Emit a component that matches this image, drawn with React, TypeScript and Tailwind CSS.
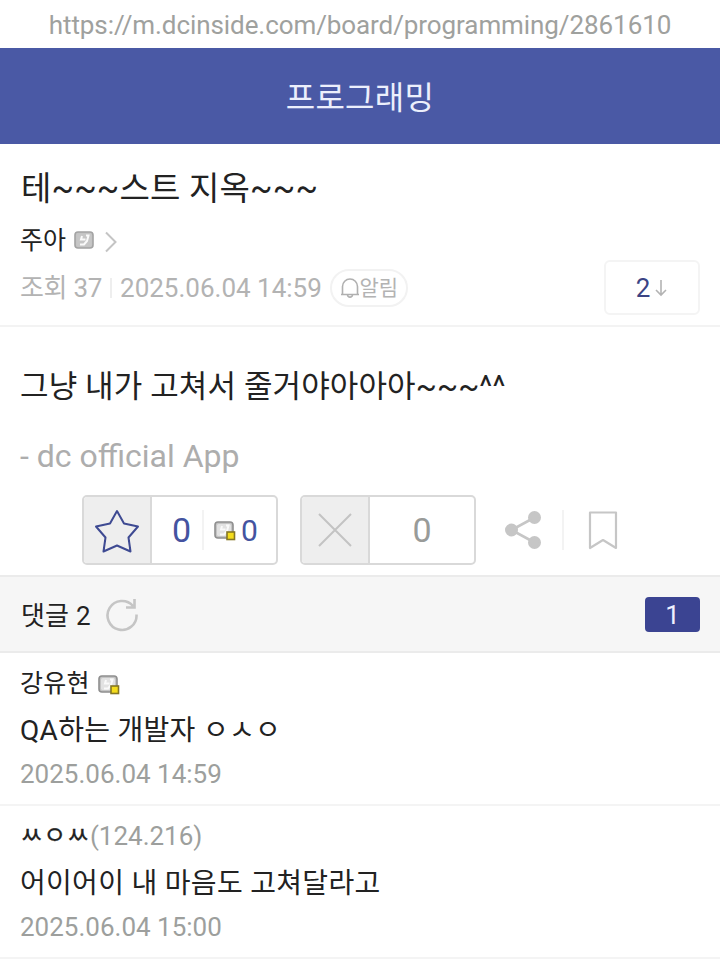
import type { ReactNode } from "react";

function LevelIcon({ fixed = false }: { fixed?: boolean }) {
  return (
    <svg className="shrink-0" width="22" height="20" viewBox="0 0 22 20" fill="none">
      <rect x="1" y="1" width="18" height="16" rx="3" fill="#c4c4c4" stroke={fixed ? "#8f8f8f" : "#a3a3a3"} strokeWidth="1.6" />
      <rect x="3" y="3" width="14" height="12" rx="1.5" fill={fixed ? "#e2e2e2" : "#c6c6c6"} />
      <path d="M8 5L7 8.500h4.500M12 4.500h2.500L13 10l-3 3.500H6" stroke="#fafafa" strokeWidth="2" />
      {fixed && <rect x="13" y="11" width="7.500" height="7.500" fill="#f4dc1c" stroke="#857723" strokeWidth="1.600" />}
    </svg>
  );
}

function Comment({ name, text, date }: { name: ReactNode; text: ReactNode; date: string }) {
  return (
    <li className="h-[153px] border-b-2 border-[#f4f4f4] px-5 pt-0.5">
      <div className="flex h-14 items-center">{name}</div>
      <p className="h-[38px] text-[28px] leading-[40px] tracking-[0.3px] text-[#222]">{text}</p>
      <p className="h-[50px] text-[26px] leading-[50px] text-[#9d9f9d]">{date}</p>
    </li>
  );
}

export default function App() {
  return (
    <div className="h-[959px] w-[720px] overflow-hidden bg-white font-[Roboto,'Noto_Sans_CJK_KR',sans-serif] whitespace-nowrap">
      <div className="h-12 text-center text-[26px] leading-[50px] tracking-[-0.08px] text-[#9fa19e]">
        https://m.dcinside.com/board/programming/2861610
      </div>
      <header className="flex h-24 items-center justify-center bg-[#4a59a5] pt-1 text-[32px] leading-[48px] tracking-[0.3px] text-[#eceffc]">
        <h1>프로그래밍</h1>
      </header>

      <section className="flex h-[183px] justify-between border-b-2 border-[#f3f3f3] px-5 pt-5">
        <div>
          <h2 className="h-12 pl-px text-[33px] leading-[50px] tracking-[0.2px] text-[#222]">테~~~스트 지옥~~~</h2>
          <div className="flex h-14 items-center text-[25px] text-[#222]">
            <span className="pt-0.5">주아</span>
            <span className="ml-2 mt-0.5 flex">
              <LevelIcon />
            </span>
            <svg className="ml-2 mt-1" width="14" height="22" viewBox="0 0 14 22" fill="none" stroke="#c4c4c4" strokeWidth="2">
              <path d="M2 1.500l9.500 9.500L2 20.500" />
            </svg>
          </div>
          <div className="flex h-[39px] items-center text-[26px] leading-[39px] text-[#b3b3b3]">
            <span className="pt-0.5 tracking-[-0.3px]">조회 37</span>
            <span className="mr-2 ml-2 h-5 w-0.5 bg-[#eee]" />
            <span className="pt-0.5">2025.06.04 14:59</span>
            <span className="ml-2 flex h-[38px] w-[78px] items-center justify-center rounded-full border-2 border-[#f2f2f2] text-[21px]">
              <svg width="20" height="22" viewBox="0 0 20 22" fill="none" stroke="#b0b0b0" strokeWidth="1.600">
                <path d="M1 17.500h18M2.500 17V9.500a7.500 7.500 0 0 1 15 0V17M7.500 18c.3 2.800 4.700 2.800 5 0" />
              </svg>
              <span className="pt-0.5">알림</span>
            </span>
          </div>
        </div>
        <div className="mt-24 flex h-[55px] w-24 items-center justify-center rounded-md border-2 border-[#f4f4f4] text-[26px] text-[#3b4484]">
          <span className="pt-0.5">2</span>
          <svg className="ml-1" width="14" height="18" viewBox="0 0 14 18" fill="none" stroke="#b3b3b3" strokeWidth="1.600">
            <path d="M7 1v15M2 11l5 5 5-5" />
          </svg>
        </div>
      </section>

      <section className="h-[248px] px-5 pt-[27px]">
        <p className="h-16 text-[31px] leading-[66px] tracking-[0.12px] text-[#222]">그냥 내가 고쳐서 줄거야아아아~~~^^</p>
        <p className="h-[77px] text-[32px] leading-[76px] text-[#adadad]">- dc official App</p>
        <div className="ml-[62px] flex h-[70px] items-center">
          <div className="flex h-[70px] w-[196px] items-center overflow-hidden rounded-[5px] border-2 border-[#d9d9d9]">
            <div className="flex h-full w-[68px] items-center justify-center border-r-2 border-[#d9d9d9] bg-[#eee]">
              <svg className="mt-0.5" width="46" height="44" viewBox="0 0 46 44" fill="none" stroke="#3e4a92" strokeWidth="2" strokeLinejoin="round">
                <path d="M23 2l7 12.500 14 3L34.500 28.500l2 14L23 36.500l-13.500 6 2-14L2 17.500l14-3z" />
              </svg>
            </div>
            <span className="w-[50px] pl-5 text-[34px] text-[#4453a0]">0</span>
            <span className="h-10 w-0.5 bg-[#f3f3f3]" />
            <span className="mt-0.5 ml-2.5 flex">
              <LevelIcon fixed />
            </span>
            <span className="ml-[5px] text-[30px] text-[#4453a0]">0</span>
          </div>
          <div className="ml-[22px] flex h-[70px] w-44 items-center overflow-hidden rounded-[5px] border-2 border-[#d9d9d9]">
            <div className="flex h-full w-[68px] shrink-0 items-center justify-center border-r-2 border-[#d9d9d9] bg-[#eee]">
              <svg width="34" height="34" viewBox="0 0 34 34" fill="none" stroke="#c3c3c3" strokeWidth="2">
                <path d="M1 1l32 32M33 1L1 33" />
              </svg>
            </div>
            <span className="flex-1 text-center text-[34px] text-[#999b99]">0</span>
          </div>
          <svg className="ml-[29px]" width="36" height="38" viewBox="0 0 36 38" fill="#c6c6c6" stroke="#c6c6c6" strokeWidth="2.600">
            <path d="M29.500 6.500L6.500 19l23 12.500" fill="none" />
            <circle cx="29.500" cy="6.500" r="5.200" />
            <circle cx="6.500" cy="19" r="5.200" />
            <circle cx="29.500" cy="31.500" r="5.200" />
          </svg>
          <span className="ml-[21px] h-10 w-0.5 bg-[#f3f3f3]" />
          <svg className="ml-6" width="30" height="40" viewBox="0 0 30 40" fill="none" stroke="#c6c6c6" strokeWidth="2.200" strokeLinejoin="round">
            <path d="M2 2.500h26V38l-13-8-13 8z" />
          </svg>
        </div>
      </section>

      <section className="flex h-[78px] items-center border-y-2 border-[#ebebeb] bg-[#f6f6f6] px-5 text-[26px]">
        <span className="pt-1 pl-px tracking-[0.2px] text-[#222]">댓글 2</span>
        <svg className="ml-3.5 mt-0.5" width="34" height="34" viewBox="0 0 34 34" fill="none" stroke="#c5c5c5" strokeWidth="2.600">
          <path d="M31.500 16.500A14.500 14.500 0 1 1 28 8M29.500 1v8.500H21" />
        </svg>
        <span className="ml-auto flex h-[35px] w-[55px] items-center justify-center rounded bg-[#3b4492] pt-[3px] text-[26px] text-[#eef0ff]">1</span>
      </section>

      <ul>
        <Comment
          name={
            <>
              <span className="pt-0.5 text-[25px] tracking-[0.2px] text-[#222]">강유현</span>
              <span className="mt-1 ml-2 flex">
                <LevelIcon fixed />
              </span>
            </>
          }
          text="QA하는 개발자 ㅇㅅㅇ"
          date="2025.06.04 14:59"
        />
        <Comment
          name={
            <>
              <span className="text-[25px] tracking-[0.3px] text-[#222] [-webkit-text-stroke:0.3px]">ㅆㅇㅆ</span>
              <span className="text-[26px] text-[#9d9f9d]">(124.216)</span>
            </>
          }
          text="어이어이 내 마음도 고쳐달라고"
          date="2025.06.04 15:00"
        />
      </ul>
    </div>
  );
}
